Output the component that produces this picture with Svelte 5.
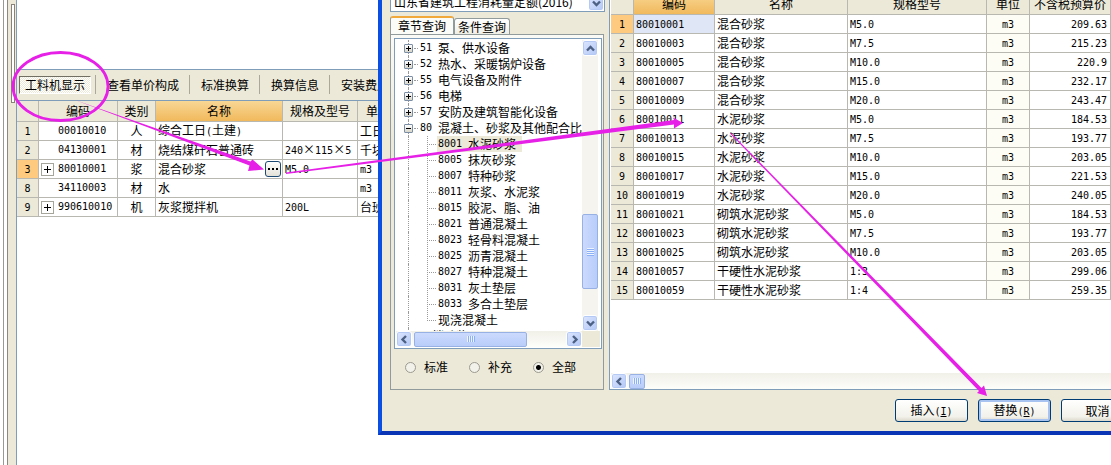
<script lang="ts">
  type TreeNode = { code: string; name: string; open?: boolean }

  const toolTabs = ['工料机显示', '查看单价构成', '标准换算', '换算信息', '安装费用']

  const items = [
    { no: '1', open: false, code: '00010010', type: '人', name: '综合工日(土建)', spec: '', unit: '工日' },
    { no: '2', open: false, code: '04130001', type: '材', name: '烧结煤矸石普通砖', spec: '240×115×5', unit: '千块' },
    { no: '3', open: true, code: '80010001', type: '浆', name: '混合砂浆', spec: 'M5.0', unit: 'm3' },
    { no: '8', open: false, code: '34110003', type: '材', name: '水', spec: '', unit: 'm3' },
    { no: '9', open: true, code: '990610010', type: '机', name: '灰浆搅拌机', spec: '200L', unit: '台班' },
  ]

  const chapters: TreeNode[] = [
    { code: '51', name: '泵、供水设备' },
    { code: '52', name: '热水、采暖锅炉设备' },
    { code: '55', name: '电气设备及附件' },
    { code: '56', name: '电梯' },
    { code: '57', name: '安防及建筑智能化设备' },
    { code: '80', name: '混凝土、砂浆及其他配合比表', open: true },
  ]

  const sections: TreeNode[] = [
    { code: '8001', name: '水泥砂浆' },
    { code: '8005', name: '抹灰砂浆' },
    { code: '8007', name: '特种砂浆' },
    { code: '8011', name: '灰浆、水泥浆' },
    { code: '8015', name: '胶泥、脂、油' },
    { code: '8021', name: '普通混凝土' },
    { code: '8023', name: '轻骨料混凝土' },
    { code: '8025', name: '沥青混凝土' },
    { code: '8027', name: '特种混凝土' },
    { code: '8031', name: '灰土垫层' },
    { code: '8033', name: '多合土垫层' },
    { code: '', name: '现浇混凝土' },
  ]

  const materials = [
    ['80010001', '混合砂浆', 'M5.0', '209.63'],
    ['80010003', '混合砂浆', 'M7.5', '215.23'],
    ['80010005', '混合砂浆', 'M10.0', '220.9'],
    ['80010007', '混合砂浆', 'M15.0', '232.17'],
    ['80010009', '混合砂浆', 'M20.0', '243.47'],
    ['80010011', '水泥砂浆', 'M5.0', '184.53'],
    ['80010013', '水泥砂浆', 'M7.5', '193.77'],
    ['80010015', '水泥砂浆', 'M10.0', '203.05'],
    ['80010017', '水泥砂浆', 'M15.0', '221.53'],
    ['80010019', '水泥砂浆', 'M20.0', '240.05'],
    ['80010021', '砌筑水泥砂浆', 'M5.0', '184.53'],
    ['80010023', '砌筑水泥砂浆', 'M7.5', '193.77'],
    ['80010025', '砌筑水泥砂浆', 'M10.0', '203.05'],
    ['80010057', '干硬性水泥砂浆', '1:3', '299.06'],
    ['80010059', '干硬性水泥砂浆', '1:4', '259.35'],
  ]

  let activeTool = $state('工料机显示')
  let selected = $state('8001')
  let scope = $state('全部')

  // latin runs get the half-width face, × takes a full cell
  function runs(text: string) {
    return text.split(/([\x20-\x7e]+|×)/).filter((part) => part !== '')
  }
</script>

{#snippet mixed(text: string)}
  {#each runs(text) as part}{#if part === '×'}<span class="times">×</span>{:else if /^[\x20-\x7e]/.test(part)}<span class="num">{part}</span>{:else}{part}{/if}{/each}
{/snippet}

{#snippet arrow(d: string)}
  <svg width="9" height="9" viewBox="0 0 9 9"><path {d} fill="none" stroke="#4d6185" stroke-width="2.4" /></svg>
{/snippet}

<div class="desktop">
  <div class="rail">
    <div class="rail-edge"></div>
    <div class="splitter"><div class="grip"></div></div>
  </div>

  <main class="workspace">
    <div class="blank"></div>
    <nav class="toolbar">
      {#each toolTabs as tab}
        <button type="button" class="tool" class:active={activeTool === tab} onclick={() => (activeTool = tab)}>{tab}</button>
      {/each}
    </nav>
    <table class="sheet items">
      <colgroup>
        <col class="w-no" /><col class="w-code" /><col class="w-type" /><col class="w-name" /><col class="w-spec" /><col />
      </colgroup>
      <thead>
        <tr>
          <th></th>
          <th>编码</th>
          <th>类别</th>
          <th class="current">名称</th>
          <th>规格及型号</th>
          <th class="unit-head">单位</th>
        </tr>
      </thead>
      <tbody>
        {#each items as item}
          <tr>
            <th class:picked={item.no === '3'}>{@render mixed(item.no)}</th>
            <td>
              <div class="code-cell">
                <span class="slot">
                  {#if item.open}<button type="button" class="plus" aria-label="展开"></button>{/if}
                </span>
                {@render mixed(item.code)}
              </div>
            </td>
            <td class="center">{item.type}</td>
            <td>
              <div class="name-cell">
                <span>{@render mixed(item.name)}</span>
                {#if item.no === '3'}<button type="button" class="more" aria-label="选择"><i></i><i></i><i></i></button>{/if}
              </div>
            </td>
            <td>{@render mixed(item.spec)}</td>
            <td>{@render mixed(item.unit)}</td>
          </tr>
        {/each}
      </tbody>
    </table>
  </main>

  <section class="dialog">
    <div class="dialog-body">
      <div class="side">
        <div class="combo">
          <select aria-label="定额库">
            <option>山东省建筑工程消耗量定额(2016)</option>
          </select>
          <span class="combo-btn">{@render arrow('M1 2.5 4.5 6 8 2.5')}</span>
        </div>

        <div class="tabs">
          <button type="button" class="tab active">章节查询</button>
          <button type="button" class="tab">条件查询</button>
        </div>

        <div class="page">
          <div class="tree-box">
            <div class="tree-main">
              <div class="tree">
                {#each chapters as node}
                  <div class="node">
                    <button type="button" class="toggle" class:open={node.open} aria-label={node.name}></button>
                    <span class="node-code num">{node.code}</span>
                    <span>{node.name}</span>
                  </div>
                {/each}
                {#each sections as node, i}
                  <div class="leaf" class:last={i === sections.length - 1}>
                    <button
                      type="button"
                      class="leaf-label"
                      class:selected={selected === node.code}
                      onclick={() => (selected = node.code)}
                    >
                      {#if node.code}<span class="leaf-code num">{node.code}</span>{/if}
                      <span>{node.name}</span>
                    </button>
                  </div>
                {/each}
                <div class="node"><span class="node-gap"></span><span>预拌砂浆</span></div>
              </div>
              <div class="vbar">
                <button type="button" class="sb" aria-label="向上">{@render arrow('M1 6.5 4.5 3 8 6.5')}</button>
                <div class="v-before"></div>
                <div class="v-thumb"><span></span></div>
                <div class="v-after"></div>
                <button type="button" class="sb" aria-label="向下">{@render arrow('M1 2.5 4.5 6 8 2.5')}</button>
              </div>
            </div>
            <div class="hbar">
              <button type="button" class="sb" aria-label="向左">{@render arrow('M6 1 2.5 4.5 6 8')}</button>
              <div class="h-thumb long"><span></span></div>
              <div class="h-after"></div>
              <button type="button" class="sb" aria-label="向右">{@render arrow('M3 1 6.5 4.5 3 8')}</button>
              <div class="corner"></div>
            </div>
          </div>
          <div class="scopes">
            {#each ['标准', '补充', '全部'] as option}
              <label><input type="radio" name="scope" value={option} bind:group={scope} />{option}</label>
            {/each}
          </div>
        </div>
      </div>

      <div class="grid-box">
        <table class="sheet materials">
          <colgroup>
            <col class="m-no" /><col class="m-code" /><col class="m-name" /><col class="m-spec" /><col class="m-unit" /><col class="m-price" />
          </colgroup>
          <thead>
            <tr>
              <th></th>
              <th class="current">编码</th>
              <th>名称</th>
              <th>规格型号</th>
              <th>单位</th>
              <th>不含税预算价</th>
            </tr>
          </thead>
          <tbody>
            {#each materials as [code, name, spec, price], i}
              <tr>
                <th class:picked={i === 0}>{@render mixed(String(i + 1))}</th>
                <td class:focus={i === 0}>{@render mixed(code)}</td>
                <td>{name}</td>
                <td>{@render mixed(spec)}</td>
                <td class="center unit">{@render mixed('m3')}</td>
                <td class="right">{@render mixed(price)}</td>
              </tr>
            {/each}
          </tbody>
        </table>
        <div class="hbar">
          <button type="button" class="sb" aria-label="向左">{@render arrow('M6 1 2.5 4.5 6 8')}</button>
          <div class="h-thumb"><span></span></div>
        </div>
      </div>
    </div>

    <footer class="actions">
      <button type="button" class="action">插入<span class="num">(<u>I</u>)</span></button>
      <button type="button" class="action default">替换<span class="num">(<u>R</u>)</span></button>
      <button type="button" class="action">取消</button>
    </footer>
  </section>

  <svg class="marks" width="1111" height="465" viewBox="0 0 1111 465" fill="#e620e6">
    <ellipse cx="60.5" cy="86.5" rx="47.5" ry="34" fill="none" stroke="#e620e6" stroke-width="2.8" />
    <path d="M75 100 250.500 161.500 252.500 159.500 264 169.500 248 171 249.500 165.500Z" />
    <path d="M286 172.500 674 120 673 117.500 683 123 674 128.500 674 124.500 286 174Z" />
    <path d="M731 133 981.500 388 984 385.500 987 396 977 393 979 391 730 133.500Z" />
  </svg>
</div>

<style>
  :global(body) {
    margin: 0;
    overflow: hidden;
    background: #fff;
  }

  .desktop {
    position: relative;
    display: flex;
    min-height: 100vh;
    overflow: hidden;
    color: #000;
    font-family: 'Noto Sans CJK SC', sans-serif;
    font-size: 12px;
    line-height: 18px;
  }

  button,
  select {
    padding: 0;
    border: 0;
    background: none;
    color: inherit;
    font: inherit;
  }

  .num {
    font-family: 'DejaVu Sans Mono', monospace;
    font-size: 10px;
  }

  .times {
    display: inline-block;
    width: 12px;
    text-align: center;
  }

  /* left window */
  .rail {
    display: flex;
    flex-shrink: 0;
  }

  .rail-edge {
    width: 3px;
    border-right: 1px solid #9a9a94;
  }

  .splitter {
    width: 8px;
    margin-left: 3px;
    padding-top: 4px;
    border-left: 1px solid #8c8a80;
    border-right: 1px solid #7f9db9;
    background: #ece9d8;
  }

  .grip {
    box-sizing: border-box;
    width: 4px;
    height: 99px;
    margin-left: 3px;
    border: 1px solid #85837a;
    background: #fff;
  }

  .workspace {
    flex: 1;
    min-width: 0;
  }

  .blank {
    height: 69px;
  }

  .toolbar {
    display: flex;
    align-items: center;
    height: 30px;
    padding-left: 2px;
    overflow: hidden;
    border-top: 1px solid #7f9db9;
    border-bottom: 1px solid #7f9db9;
    background: #ece9d8;
  }

  .tool {
    position: relative;
    flex-shrink: 0;
    height: 18px;
    margin-right: 10px;
    padding: 0 5px;
    line-height: 16px;
    white-space: nowrap;
    border: 1px solid transparent;
  }

  .tool:not(:last-child)::after {
    content: '';
    position: absolute;
    top: -2px;
    right: -6px;
    width: 1px;
    height: 19px;
    background: #aca899;
  }

  .tool.active {
    border-color: #716f64 #fff #fff #716f64;
    background: repeating-conic-gradient(#fff 0 25%, #ece9d8 0 50%) 0 0 / 2px 2px;
  }

  .sheet {
    table-layout: fixed;
    border-collapse: separate;
    border-spacing: 0;
  }

  .sheet th,
  .sheet td {
    height: 18px;
    padding: 0 0 0 2px;
    overflow: hidden;
    line-height: 14px;
    white-space: nowrap;
    border-right: 1px solid #b8b8b0;
    border-bottom: 1px solid #b8b8b0;
    text-align: left;
  }

  .sheet th {
    padding: 0;
    background: #ece9d8;
    font-weight: 400;
    text-align: center;
  }

  .sheet thead th {
    height: 20px;
  }

  .sheet th.current {
    background: linear-gradient(#f8d795, #f1b95c);
  }

  .sheet th.picked {
    background: #fdca80;
  }

  .sheet .center {
    padding: 0;
    text-align: center;
  }

  .sheet .right {
    padding-right: 3px;
    text-align: right;
  }

  .items {
    width: 400px;
  }

  .sheet .unit-head {
    padding-left: 8px;
    text-align: left;
  }

  .w-no { width: 22px; }
  .w-code { width: 79px; }
  .w-type { width: 38px; }
  .w-name { width: 127px; }
  .w-spec { width: 75px; }

  .code-cell,
  .name-cell {
    display: flex;
    align-items: center;
    height: 18px;
  }

  .name-cell {
    justify-content: space-between;
  }

  .slot {
    display: flex;
    flex-shrink: 0;
    width: 17px;
  }

  .plus {
    width: 13px;
    height: 13px;
    border: 1px solid #a5a59c;
    background:
      linear-gradient(#000, #000) center / 7px 1px no-repeat,
      linear-gradient(#000, #000) center / 1px 7px no-repeat,
      #fff;
  }

  .more {
    display: flex;
    flex-shrink: 0;
    align-items: center;
    justify-content: center;
    gap: 2px;
    width: 16px;
    height: 16px;
    margin-right: 1px;
    border: 1px solid #1c4a72;
    border-radius: 3px;
    background: linear-gradient(#fff, #e4e2d8);
  }

  .more i {
    width: 2px;
    height: 2px;
    background: #000;
  }

  /* query dialog, dragged partly off the screen */
  .dialog {
    position: absolute;
    top: -8px;
    left: 378px;
    right: -32px;
    border-left: 4px solid #0a4fe2;
    border-bottom: 4px solid #0a35b4;
    background: #ece9d8;
  }

  .dialog-body {
    display: flex;
    gap: 4px;
    padding-left: 8px;
  }

  .side {
    display: flex;
    flex-direction: column;
    flex-shrink: 0;
    width: 215px;
  }

  .combo {
    display: flex;
    align-items: flex-end;
    height: 19px;
    border: 1px solid #7f9db9;
    border-top: 0;
    background: #fff;
  }

  .combo select {
    flex: 1;
    min-width: 0;
    height: 18px;
    padding-left: 3px;
    appearance: none;
  }

  .combo-btn,
  .sb {
    display: flex;
    flex-shrink: 0;
    align-items: center;
    justify-content: center;
    box-sizing: border-box;
    width: 16px;
    height: 16px;
    border: 1px solid #fff;
    border-radius: 3px;
    background: linear-gradient(135deg, #dce6fe, #b3c8f6);
    box-shadow: inset 0 0 0 1px #b5c9f5;
  }

  .tabs {
    display: flex;
    align-items: flex-end;
    height: 18px;
    margin-top: 4px;
  }

  .tab {
    box-sizing: border-box;
    height: 16px;
    padding: 0 3px;
    line-height: 14px;
    border: 1px solid #919b9c;
    border-bottom: 0;
    border-radius: 3px 3px 0 0;
    background: linear-gradient(#fff, #f0efe6);
  }

  .tab.active {
    height: 18px;
    padding: 0 7px;
    border-top: 2px solid #f2a93b;
    background: #fbfbf8;
  }

  .page {
    display: flex;
    flex: 1;
    flex-direction: column;
    margin-right: 1px;
    padding: 3px 1px 0 3px;
    border: 1px solid #919b9c;
    background: linear-gradient(#fafaf7, #ece9d8 30%);
  }

  .tree-box {
    padding: 1px;
    border: 1px solid #7f9db9;
    background: #fff;
  }

  .tree-main {
    display: flex;
    height: 291px;
  }

  .tree {
    flex: 1;
    min-width: 0;
    overflow: hidden;
  }

  .node,
  .leaf {
    position: relative;
    display: flex;
    align-items: center;
    height: 16px;
    line-height: 16px;
    white-space: nowrap;
  }

  .node {
    padding-left: 8px;
  }

  .node > * {
    flex-shrink: 0;
  }

  .node::before,
  .leaf::before {
    content: '';
    position: absolute;
    top: 0;
    left: 12px;
    height: 16px;
    border-left: 1px dotted #9a9a9a;
  }

  .node::after {
    content: '';
    position: absolute;
    left: 18px;
    width: 4px;
    border-top: 1px dotted #9a9a9a;
  }

  .toggle {
    position: relative;
    box-sizing: border-box;
    width: 9px;
    height: 9px;
    border: 1px solid #7b8ea6;
    border-radius: 1px;
    background:
      linear-gradient(#000, #000) center / 5px 1px no-repeat,
      linear-gradient(#000, #000) center / 1px 5px no-repeat,
      linear-gradient(#fff, #d8d5c8);
  }

  .toggle.open {
    background:
      linear-gradient(#000, #000) center / 5px 1px no-repeat,
      linear-gradient(#fff, #d8d5c8);
  }

  .node-code {
    width: 18px;
    margin-left: 7px;
  }

  .node-gap {
    width: 16px;
  }

  .leaf {
    padding-left: 41px;
  }

  .leaf::after {
    content: '';
    position: absolute;
    top: 0;
    left: 31px;
    width: 9px;
    height: 16px;
    background:
      repeating-linear-gradient(90deg, #9a9a9a 0 1px, transparent 1px 2px) 0 8px / 9px 1px no-repeat,
      repeating-linear-gradient(#9a9a9a 0 1px, transparent 1px 2px) 0 0 / 1px 16px no-repeat;
  }

  .leaf.last::after {
    height: 9px;
  }

  .leaf-label {
    display: flex;
    padding: 0 6px 0 1px;
    line-height: 16px;
  }

  .leaf-label.selected {
    background: #ece9d8;
  }

  .leaf-code {
    width: 30px;
    text-align: left;
  }

  .vbar {
    display: flex;
    flex-direction: column;
    flex-shrink: 0;
    width: 16px;
    margin-right: 2px;
    background: #f5f4ee;
  }

  .v-before {
    flex: 158;
  }

  .v-after {
    flex: 26;
  }

  .v-thumb,
  .h-thumb {
    display: flex;
    align-items: center;
    justify-content: center;
    box-sizing: border-box;
    border: 1px solid #98b1e4;
    border-radius: 2px;
    background: linear-gradient(90deg, #cbdafd, #b9cdfa);
  }

  .v-thumb {
    height: 75px;
  }

  .v-thumb span {
    width: 7px;
    height: 8px;
    background: repeating-linear-gradient(#eef4fe 0 1px, #8cb0f8 1px 2px);
  }

  .h-thumb {
    width: 16px;
    height: 15px;
    margin-left: 2px;
    background: linear-gradient(#cbdafd, #b9cdfa);
  }

  .h-thumb.long {
    width: 113px;
  }

  .h-thumb span {
    width: 8px;
    height: 6px;
    background: repeating-linear-gradient(90deg, #eef4fe 0 1px, #8cb0f8 1px 2px);
  }

  .h-after {
    flex: 1;
  }

  .hbar {
    display: flex;
    align-items: center;
    height: 16px;
    background: linear-gradient(#f1f0e8, #fdfdfa);
  }

  .corner {
    align-self: stretch;
    width: 18px;
    background: #ece9d8;
  }

  .scopes {
    display: flex;
    flex: 1;
    align-items: center;
    padding: 0 0 4px 11px;
  }

  .scopes label {
    display: flex;
    align-items: center;
    gap: 8px;
    width: 64px;
  }

  .scopes input {
    box-sizing: border-box;
    width: 11px;
    height: 11px;
    margin: 0;
    appearance: none;
    border: 1px solid #9b9a90;
    border-radius: 50%;
    background: #f3f2ea;
  }

  .scopes input:checked {
    background: radial-gradient(circle, #000 0 2px, #f3f2ea 3px);
  }

  .grid-box {
    display: flex;
    flex: 1;
    flex-direction: column;
    justify-content: space-between;
    min-width: 0;
    height: 396px;
    padding-left: 1px;
    border: 1px solid #7f9db9;
    background: #fff;
  }

  .materials {
    width: 500px;
  }

  .sheet.materials thead th {
    height: 21px;
  }

  .m-no { width: 23px; }
  .m-code { width: 81px; }
  .m-name { width: 133px; }
  .m-spec { width: 139px; }
  .m-unit { width: 43px; }
  .m-price { width: 81px; }

  .materials .unit {
    background: #fdfdf5;
  }

  .materials .focus {
    background: #dfe6f5;
  }

  .actions {
    display: flex;
    justify-content: flex-end;
    gap: 10px;
    padding: 9px 9px 9px 0;
  }

  .action {
    box-sizing: border-box;
    width: 73px;
    height: 23px;
    border: 1px solid #003c74;
    border-radius: 3px;
    background: linear-gradient(#fff, #f2f1ea 80%, #dcd8cc);
  }

  .action.default {
    box-shadow: inset 0 0 0 2px #a9c3f0;
  }

  .marks {
    position: absolute;
    top: 0;
    left: 0;
    pointer-events: none;
  }
</style>
